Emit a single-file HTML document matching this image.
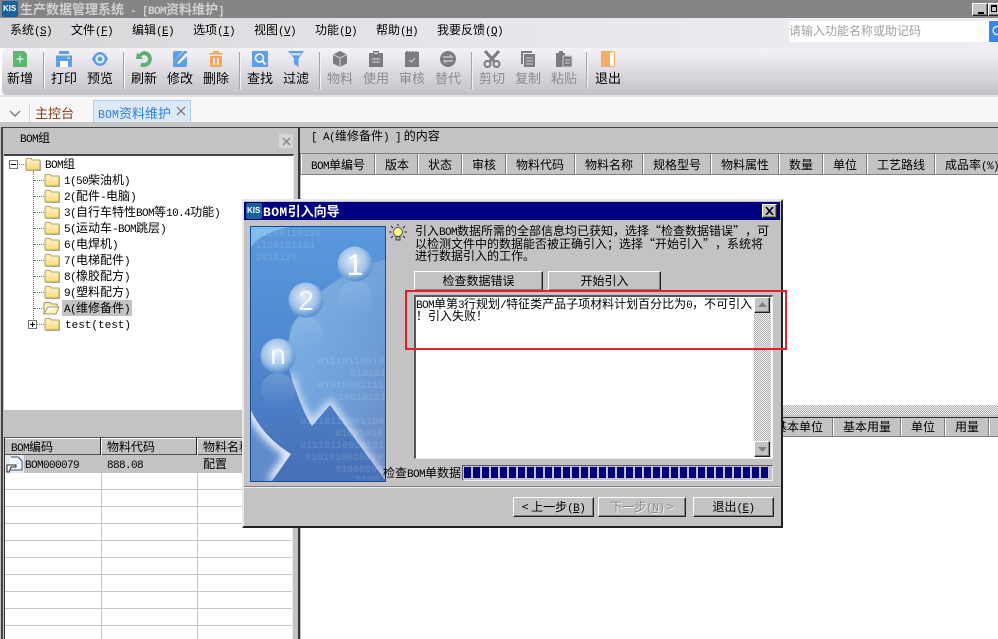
<!DOCTYPE html>
<html lang="zh"><head><meta charset="utf-8"><title>BOM资料维护</title>
<style>
html,body{margin:0;padding:0;width:998px;height:639px;overflow:hidden;background:#fff}
body{position:relative;font:12px/14px "WenQuanYi Zen Hei","Noto Sans CJK SC",sans-serif;color:#000}
div,svg,span.t{position:absolute}
.t{position:absolute;white-space:nowrap;line-height:14px}
i{font:normal 11px/14px "Liberation Mono",monospace;letter-spacing:-.6px}
.g{color:#8c8a8d}
.tb{font-size:13px;top:71px;width:36px;text-align:center}
.sep{top:52px;width:1px;height:37px;background:#a8a6aa;border-right:1px solid #f4f2f5}
.ic{top:50px;width:20px;height:18px}
.hs{width:1px;background:#808080;border-right:1px solid #fff}
.hl{height:1px;left:5px;width:287px;background:#c8c6c9}
.vl{width:1px;top:473px;height:166px;background:#c8c6c9}
.btn{background:#c4c2c5;border:1px solid;border-color:#fff #222 #222 #fff;box-shadow:inset -1px -1px 0 #808080;box-sizing:border-box;text-align:center}
.dither{background:repeating-conic-gradient(#b4b2b5 0 25%,#eee 0 50%) 0 0/2px 2px}
.q{display:inline-block;width:12px}
.dots{border-top:1px dotted #777;height:0;width:10px}
</style></head><body>
<svg width="0" height="0" style="position:absolute"><defs>
<linearGradient id="fg" x1="0" y1="0" x2="0" y2="1"><stop offset="0" stop-color="#fff8d0"/><stop offset="1" stop-color="#f7d670"/></linearGradient>
<symbol id="folder" viewBox="0 0 16 14"><path d="M1 3V2.500L2 1.500H6L7.500 3H15V13H1Z" fill="url(#fg)" stroke="#b5a05a"/><path d="M2 13.500H15.500V4" fill="none" stroke="#9a9a9a" stroke-width=".7"/></symbol>
</defs></svg>

<!-- title bar -->
<div style="left:0;top:0;width:998px;height:18px;background:#858386"></div>
<svg style="left:2px;top:1px" width="16" height="16"><rect width="16" height="16" rx="2" fill="#17619c"/></svg>
<span class="t" style="left:3px;top:2px;font:bold 8px/14px 'Liberation Sans',sans-serif;color:#fff">KIS</span>
<span class="t" style="left:20px;top:2px;font-size:13px;font-weight:bold;color:#d2d0d2">生产数据管理系统<i style="font-weight:bold"> - [BOM</i>资料维护<i style="font-weight:bold">]</i></span>
<div class="btn" style="left:972px;top:3px;width:16px;height:13px"><div style="left:5px;top:8px;width:6px;height:2px;background:#000"></div></div>
<div class="btn" style="left:988px;top:3px;width:12px;height:13px"><div style="left:2px;top:1px;width:6px;height:7px;border:1px solid #000;border-top-width:2px;box-sizing:border-box"></div></div>

<!-- menu -->
<div style="left:0;top:18px;width:998px;height:30px;background:linear-gradient(90deg,#d8d6d9,#e8e6ea 50%,#efedf1)"></div>
<span class="t" style="left:10px;top:23px">系统<i>(<u>S</u>)</i></span>
<span class="t" style="left:71px;top:23px">文件<i>(<u>F</u>)</i></span>
<span class="t" style="left:132px;top:23px">编辑<i>(<u>E</u>)</i></span>
<span class="t" style="left:193px;top:23px">选项<i>(<u>I</u>)</i></span>
<span class="t" style="left:254px;top:23px">视图<i>(<u>V</u>)</i></span>
<span class="t" style="left:315px;top:23px">功能<i>(<u>D</u>)</i></span>
<span class="t" style="left:376px;top:23px">帮助<i>(<u>H</u>)</i></span>
<span class="t" style="left:437px;top:23px">我要反馈<i>(<u>Q</u>)</i></span>
<div style="left:789px;top:21px;width:200px;height:21px;background:#fff"></div>
<span class="t" style="left:789px;top:24px;font-size:12px;color:#a0a0a0">请输入功能名称或助记码</span>
<div style="left:989px;top:21px;width:9px;height:21px;background:#3a86ee"></div>
<svg style="left:989px;top:21px" width="9" height="21"><circle cx="8" cy="9.500" r="4" fill="none" stroke="#d8e8ff" stroke-width="1.500"/></svg>

<!-- toolbar -->
<div style="left:2px;top:48px;width:996px;height:47px;border-radius:4px 0 0 4px;background:linear-gradient(180deg,#f4f2f6 0,#eceaee 20%,#c3c1c5 100%)"></div>
<div style="left:0;top:95px;width:998px;height:2px;background:#e2e0e3"></div>

<svg class="ic" style="left:10px"><path d="M3 1H14L17 4V17H3Z" fill="#5cb76f"/><path d="M10 5.500V12.500M6.500 9H13.500" stroke="#dff3e3" stroke-width="1.300"/></svg>
<svg class="ic" style="left:54px"><path d="M5 1H15V4H5Z" fill="#5f9ee8"/><path d="M2 5.500H18V17H2Z" fill="#5f9ee8"/><path d="M6 11H14V17H6Z" fill="#fff"/><path d="M13 8H16" stroke="#fff"/></svg>
<svg class="ic" style="left:90px"><path d="M2 9Q5 2 10 2Q15 2 18 9Q15 16 10 16Q5 16 2 9Z" fill="#5f9ee8"/><circle cx="10" cy="9" r="4.500" fill="#e6f0fb"/><circle cx="10" cy="9" r="2.500" fill="#5f9ee8"/></svg>
<svg class="ic" style="left:134px"><path d="M10 1A8 8 0 1 1 6 16L8 12.500A4 4 0 1 0 7 6.500L9 9H2L3 2.500L5 4.500A8 8 0 0 1 10 1Z" fill="#5cae72"/></svg>
<svg class="ic" style="left:170px"><path d="M3 3Q3 1 5 1H13L3 12Z" fill="#5f9ee8"/><path d="M3 17V12L14 1H17V15Q17 17 15 17Z" fill="#5f9ee8"/><path d="M8 12L16 3L18 5L10 13L7 14Z" fill="#fff"/></svg>
<svg class="ic" style="left:206px"><path d="M3 3H17V4.500H3ZM7 1H13V3H7Z" fill="#f0a860"/><path d="M4 6H16V17H4Z" fill="#f0a860"/><path d="M8 8V15M12 8V15" stroke="#fff" stroke-width="1.300"/></svg>
<svg class="ic" style="left:250px"><path d="M2 1H18V17H2Z" fill="#5f9ee8"/><circle cx="9.500" cy="8" r="4" fill="none" stroke="#fff" stroke-width="1.500"/><path d="M12.500 11L15.500 14.500" stroke="#fff" stroke-width="1.800"/></svg>
<svg class="ic" style="left:286px"><path d="M2 1H18L12.500 8.500V17L8 14V8.500Z" fill="#5f9ee8"/><path d="M4 3H16L14 5.500H6Z" fill="#c7ddf6"/></svg>
<svg class="ic" style="left:330px"><path d="M10 1L17 4.500V13.500L10 17L3 13.500V4.500Z" fill="#7d7b7f"/><path d="M3 4.500L10 8V17M10 8L17 4.500" fill="none" stroke="#d2d0d4"/></svg>
<svg class="ic" style="left:366px"><path d="M3 3H7V1H13V3H17V17H3Z" fill="#7d7b7f"/><path d="M8 2.500H12V4H8Z" fill="#d2d0d4"/><path d="M6 9H14M6 12H14" stroke="#d2d0d4"/></svg>
<svg class="ic" style="left:402px"><path d="M3 2H17V17H3Z" fill="#7d7b7f"/><path d="M5 1V3M8 1V3M11 1V3M14 1V3" stroke="#7d7b7f" stroke-width="1.500"/><path d="M7 10L9.500 12L13 8" fill="none" stroke="#d2d0d4"/></svg>
<svg class="ic" style="left:438px"><circle cx="10" cy="9" r="8" fill="#7d7b7f"/><path d="M5 7H14L12 5M15 11H6L8 13" fill="none" stroke="#d2d0d4" stroke-width="1.200"/></svg>
<svg class="ic" style="left:482px"><path d="M3 1L12 11M17 1L8 11" stroke="#7d7b7f" stroke-width="3"/><circle cx="5.500" cy="14" r="3" fill="none" stroke="#7d7b7f" stroke-width="2"/><circle cx="14.500" cy="14" r="3" fill="none" stroke="#7d7b7f" stroke-width="2"/></svg>
<svg class="ic" style="left:518px"><path d="M3 1H14V3H5V14H3Z" fill="#7d7b7f"/><path d="M6 4H17V17H6Z" fill="#7d7b7f"/><path d="M8 8H15M8 11H15M8 14H15" stroke="#d2d0d4"/></svg>
<svg class="ic" style="left:554px"><path d="M2 3H5V1H9V3H11V17H2Z" fill="#7d7b7f"/><path d="M9 6H18V17H9Z" fill="#7d7b7f" stroke="#d2d0d4"/><path d="M11 10H16M11 13H16" stroke="#d2d0d4"/></svg>
<svg class="ic" style="left:598px"><path d="M3 1H17V17H3Z" fill="#f2ae62"/><path d="M12 3L16 1.500V16H12Z" fill="#fff"/></svg>

<div class="sep" style="left:43px"></div><div class="sep" style="left:123px"></div><div class="sep" style="left:239px"></div><div class="sep" style="left:319px"></div><div class="sep" style="left:471px"></div><div class="sep" style="left:586px"></div>
<span class="t tb" style="left:2px">新增</span><span class="t tb" style="left:46px">打印</span><span class="t tb" style="left:82px">预览</span><span class="t tb" style="left:126px">刷新</span><span class="t tb" style="left:162px">修改</span><span class="t tb" style="left:198px">删除</span><span class="t tb" style="left:242px">查找</span><span class="t tb" style="left:278px">过滤</span>
<span class="t tb g" style="left:322px">物料</span><span class="t tb g" style="left:358px">使用</span><span class="t tb g" style="left:394px">审核</span><span class="t tb g" style="left:430px">替代</span><span class="t tb g" style="left:474px">剪切</span><span class="t tb g" style="left:510px">复制</span><span class="t tb g" style="left:546px">粘贴</span><span class="t tb" style="left:590px">退出</span>

<!-- tab strip -->
<div style="left:0;top:97px;width:998px;height:25px;background:#f7f7f7"></div>
<div style="left:0;top:122px;width:998px;height:4px;background:#c8c5c9"></div>
<svg style="left:9px;top:109px" width="12" height="9"><path d="M1 2L6 7L11 2" fill="none" stroke="#666" stroke-width="1.200"/></svg>
<div style="left:29px;top:104px;width:1px;height:18px;background:#d8d6d8"></div>
<span class="t" style="left:35px;top:106px;font-size:13px;color:#8a3a1c">主控台</span>
<div style="left:93px;top:100px;width:96px;background:#dde9f6;border:1px solid #aed2f2;border-bottom:0;height:21px"></div>
<span class="t" style="left:98px;top:106px;font-size:13px;color:#2a7fe0"><i style="font-size:11.500px;letter-spacing:.1px">BOM</i>资料维护</span>
<svg style="left:176px;top:106px" width="10" height="10"><path d="M1 1L9 9M9 1L1 9" stroke="#666" stroke-width="1"/></svg>

<!-- main background -->
<div style="left:0;top:126px;width:301px;height:513px;background:#c4c2c5"></div>
<div style="left:1px;top:127px;width:297px;height:512px;border:solid #444;border-width:1px 0 0 2px;box-sizing:border-box"></div>
<div style="left:298px;top:127px;width:2px;height:512px;background:#333"></div>
<div style="left:300px;top:126px;width:698px;height:28px;background:#c4c2c5"></div>
<div style="left:300px;top:127px;width:698px;height:1px;background:#444"></div>
<span class="t" style="left:20px;top:131px"><i>BOM</i>组</span>
<div style="left:279px;top:134px;width:14px;height:14px;background:#d6d4d6"></div>
<svg style="left:282px;top:137px" width="9" height="9"><path d="M1 1L8 8M8 1L1 8" stroke="#888" stroke-width="1.500"/></svg>
<span class="t" style="left:311px;top:129px"><i>[ A(</i>维修备件<i>) ]</i> 的内容</span>

<!-- tree -->
<div style="left:4px;top:154px;width:290px;height:256px;background:#fff;border-top:2px solid #444;border-right:1px solid #eee;box-sizing:border-box"></div>
<div style="left:33px;top:171px;width:0;height:154px;border-left:1px dotted #777"></div>
<div style="left:17px;top:164px;width:9px;border-top:1px dotted #777"></div>
<div style="left:9px;top:160px;width:9px;height:9px;border:1px solid #777;background:#fff;box-sizing:border-box"><div style="left:1px;top:3px;width:5px;height:1px;background:#000"></div></div>
<svg style="left:25px;top:157px" width="16" height="14"><use href="#folder"/></svg>
<span class="t" style="left:45px;top:157px"><i>BOM</i>组</span>

<div class="dots" style="left:34px;top:180px"></div><svg style="left:44px;top:173px" width="16" height="14"><use href="#folder"/></svg><span class="t" style="left:64px;top:173px"><i>1(50</i>柴油机<i>)</i></span>
<div class="dots" style="left:34px;top:196px"></div><svg style="left:44px;top:189px" width="16" height="14"><use href="#folder"/></svg><span class="t" style="left:64px;top:189px"><i>2(</i>配件<i>-</i>电脑<i>)</i></span>
<div class="dots" style="left:34px;top:212px"></div><svg style="left:44px;top:205px" width="16" height="14"><use href="#folder"/></svg><span class="t" style="left:64px;top:205px"><i>3(</i>自行车特性<i>BOM</i>等<i>10.4</i>功能<i>)</i></span>
<div class="dots" style="left:34px;top:228px"></div><svg style="left:44px;top:221px" width="16" height="14"><use href="#folder"/></svg><span class="t" style="left:64px;top:221px"><i>5(</i>运动车<i>-BOM</i>跳层<i>)</i></span>
<div class="dots" style="left:34px;top:244px"></div><svg style="left:44px;top:237px" width="16" height="14"><use href="#folder"/></svg><span class="t" style="left:64px;top:237px"><i>6(</i>电焊机<i>)</i></span>
<div class="dots" style="left:34px;top:260px"></div><svg style="left:44px;top:253px" width="16" height="14"><use href="#folder"/></svg><span class="t" style="left:64px;top:253px"><i>7(</i>电梯配件<i>)</i></span>
<div class="dots" style="left:34px;top:276px"></div><svg style="left:44px;top:269px" width="16" height="14"><use href="#folder"/></svg><span class="t" style="left:64px;top:269px"><i>8(</i>橡胶配方<i>)</i></span>
<div class="dots" style="left:34px;top:292px"></div><svg style="left:44px;top:285px" width="16" height="14"><use href="#folder"/></svg><span class="t" style="left:64px;top:285px"><i>9(</i>塑料配方<i>)</i></span>
<div class="dots" style="left:34px;top:308px"></div><svg style="left:43px;top:301px" width="17" height="14"><path d="M1 13V2.500L2 1.500H7L8.500 3H14V6H5L1 13H13L16 6H14" fill="#fdf0b8" stroke="#a89a60"/></svg>
<div style="left:62px;top:300px;width:70px;height:16px;background:#c4c2c5"></div><span class="t" style="left:64px;top:301px"><i>A(</i>维修备件<i>)</i></span>
<div class="dots" style="left:36px;top:324px;width:8px"></div><svg style="left:44px;top:317px" width="16" height="14"><use href="#folder"/></svg><span class="t" style="left:65px;top:317px"><i style="letter-spacing:0">test(test)</i></span>
<div style="left:28px;top:320px;width:9px;height:9px;border:1px solid #777;background:#fff;box-sizing:border-box"><div style="left:1px;top:3px;width:5px;height:1px;background:#000"></div><div style="left:3px;top:1px;width:1px;height:5px;background:#000"></div></div>

<!-- left table -->
<div style="left:4px;top:437px;width:289px;height:202px;background:#fff;border-top:1px solid #555;border-left:1px solid #333;border-right:1px solid #eee;box-sizing:border-box"></div>
<div style="left:5px;top:438px;width:287px;height:17px;background:#c4c2c5;border-top:1px solid #fff;border-bottom:1px solid #555;box-sizing:border-box"></div>
<div style="left:100px;top:438px;width:1px;height:17px;background:#222;border-right:1px solid #fff"></div><div style="left:196px;top:438px;width:1px;height:17px;background:#222;border-right:1px solid #fff"></div>
<span class="t" style="left:11px;top:440px"><i>BOM</i>编码</span><span class="t" style="left:107px;top:440px">物料代码</span><span class="t" style="left:203px;top:440px">物料名称</span>
<div style="left:5px;top:455px;width:287px;height:18px;background:#c4c2c5"></div>
<div style="left:5px;top:455px;width:19px;height:18px;background:#e8e8ea"></div>
<svg style="left:6px;top:456px" width="18" height="17"><path d="M5 1H12L16 5V14H2" fill="#f4f8ff" stroke="#33508a"/><path d="M1 9H10V11H5L3 16H1Z" fill="#fff" stroke="#222"/></svg>
<span class="t" style="left:25px;top:457px"><i>BOM000079</i></span><span class="t" style="left:107px;top:457px"><i>888.08</i></span><span class="t" style="left:203px;top:457px">配置</span>
<div class="hl" style="top:489px"></div><div class="hl" style="top:506px"></div><div class="hl" style="top:523px"></div><div class="hl" style="top:540px"></div><div class="hl" style="top:557px"></div><div class="hl" style="top:574px"></div><div class="hl" style="top:591px"></div><div class="hl" style="top:608px"></div><div class="hl" style="top:625px"></div>
<div class="vl" style="left:101px"></div><div class="vl" style="left:197px"></div>

<!-- right top header -->
<div style="left:300px;top:153px;width:698px;height:22px;background:#c4c2c5;border-top:1px solid #808080;border-bottom:1px solid #808080;box-sizing:border-box"></div>
<div class="hs" style="left:300px;top:154px;height:20px"></div>
<div class="hs" style="left:374px;top:154px;height:20px"></div><div class="hs" style="left:417px;top:154px;height:20px"></div><div class="hs" style="left:461px;top:154px;height:20px"></div><div class="hs" style="left:505px;top:154px;height:20px"></div><div class="hs" style="left:574px;top:154px;height:20px"></div><div class="hs" style="left:642px;top:154px;height:20px"></div><div class="hs" style="left:710px;top:154px;height:20px"></div><div class="hs" style="left:778px;top:154px;height:20px"></div><div class="hs" style="left:822px;top:154px;height:20px"></div><div class="hs" style="left:866px;top:154px;height:20px"></div><div class="hs" style="left:934px;top:154px;height:20px"></div>
<span class="t" style="left:311px;top:158px"><i>BOM</i>单编号</span><span class="t" style="left:385px;top:158px">版本</span><span class="t" style="left:428px;top:158px">状态</span><span class="t" style="left:472px;top:158px">审核</span><span class="t" style="left:516px;top:158px">物料代码</span><span class="t" style="left:585px;top:158px">物料名称</span><span class="t" style="left:653px;top:158px">规格型号</span><span class="t" style="left:721px;top:158px">物料属性</span><span class="t" style="left:789px;top:158px">数量</span><span class="t" style="left:833px;top:158px">单位</span><span class="t" style="left:877px;top:158px">工艺路线</span><span class="t" style="left:945px;top:158px">成品率<i>(%)</i></span>

<!-- right lower header -->
<div class="dither" style="left:301px;top:405px;width:697px;height:10px"></div>
<div style="left:301px;top:415px;width:697px;height:2px;background:#c4c2c5"></div>
<div style="left:301px;top:417px;width:697px;height:20px;background:#c4c2c5;border-top:1px solid #333;border-bottom:1px solid #808080;box-sizing:border-box"></div>
<div class="hs" style="left:832px;top:418px;height:18px"></div><div class="hs" style="left:900px;top:418px;height:18px"></div><div class="hs" style="left:944px;top:418px;height:18px"></div><div class="hs" style="left:988px;top:418px;height:18px"></div>
<span class="t" style="left:775px;top:420px">基本单位</span><span class="t" style="left:843px;top:420px">基本用量</span><span class="t" style="left:911px;top:420px">单位</span><span class="t" style="left:955px;top:420px">用量</span>

<!-- dialog -->
<div style="left:242px;top:199px;width:541px;height:329px;background:#c4c2c5;border:solid 2px;border-color:#e8e8e8 #222 #222 #e8e8e8;box-sizing:border-box"></div>
<div style="left:244px;top:202px;width:536px;height:18px;background:#000080"></div>
<svg style="left:246px;top:203px" width="16" height="16"><rect width="16" height="16" rx="2" fill="#17619c"/></svg>
<span class="t" style="left:247px;top:204px;font:bold 8px/14px 'Liberation Sans',sans-serif;color:#fff">KIS</span>
<span class="t" style="left:263px;top:204px;font-size:13px;font-weight:bold;color:#fff"><i style="font-size:13px;font-weight:bold;letter-spacing:.4px">BOM</i>引入向导</span>
<div class="btn" style="left:762px;top:204px;width:15px;height:14px"></div>
<svg style="left:765px;top:207px" width="9" height="8"><path d="M1 0L8 8M8 0L1 8" stroke="#000" stroke-width="1.600"/></svg>

<!-- wizard picture -->
<svg style="left:250px;top:226px" width="136" height="256" viewBox="0 0 136 256">
<defs>
<linearGradient id="bg" x1="0" y1="0" x2="0" y2="1"><stop offset="0" stop-color="#5a98dc"/><stop offset=".5" stop-color="#4f88cf"/><stop offset="1" stop-color="#466fb6"/></linearGradient>
<linearGradient id="lt" x1="0" y1="0" x2="1" y2="1"><stop offset="0" stop-color="#80b4e6"/><stop offset=".6" stop-color="#6f9fd8"/><stop offset="1" stop-color="#6a88c2"/></linearGradient>
<radialGradient id="sp" cx=".45" cy=".4" r=".62"><stop offset="0" stop-color="#e4eefa"/><stop offset=".6" stop-color="#a2c4e8"/><stop offset="1" stop-color="#5288cc"/></radialGradient>
<linearGradient id="rf" x1="0" y1="0" x2="0" y2="1"><stop offset="0" stop-color="#a8c8ea" stop-opacity=".3"/><stop offset="1" stop-color="#a8c8ea" stop-opacity="0"/></linearGradient>
<filter id="bl" x="-30%" y="-30%" width="160%" height="160%"><feGaussianBlur stdDeviation="4"/></filter>
<clipPath id="lc"><path d="M136 33Q75 50 45 95Q30 125 46 165Q54 188 62 200L80 179L136 255Z"/></clipPath>
<clipPath id="lc2"><path d="M0 182Q12 210 41 228L22 255H0Z"/></clipPath>
</defs>
<rect width="136" height="256" fill="url(#bg)"/>
<path d="M0 0H45Q12 5 0 22Z" fill="#80baee"/>
<path d="M136 33Q75 50 45 95Q30 125 46 165Q54 188 62 200L80 179L136 255Z" fill="url(#lt)"/>
<g clip-path="url(#lc)"><path d="M40 150Q46 178 62 200L80 179L134 256" fill="none" stroke="#e8f1fa" stroke-width="9" filter="url(#bl)" opacity=".8"/></g>
<path d="M0 182Q12 210 41 228L22 255H0Z" fill="#5f8ccc"/>
<g clip-path="url(#lc2)"><path d="M0 182Q12 210 41 228L22 255" fill="none" stroke="#eef4fb" stroke-width="10" filter="url(#bl)"/></g>
<g font-family="Liberation Mono,monospace" font-size="10" fill="#fff" opacity=".16"><text x="68" y="138">01110110010110</text><text x="100" y="150">0101011</text><text x="68" y="162">010100011111</text><text x="88" y="174">100101011</text><text x="50" y="198">0111011100110001</text><text x="85" y="210">01001010</text><text x="50" y="222">01110110010101</text><text x="55" y="234">01010100100100</text><text x="85" y="246">010000001</text><text x="105" y="256">1100</text><text x="5" y="10">01100110110</text><text x="5" y="22">1100101101</text><text x="5" y="34">1011110</text></g>
<circle cx="105" cy="72" r="17" fill="url(#rf)"/><circle cx="56" cy="108" r="17" fill="url(#rf)"/><circle cx="28" cy="164" r="17" fill="url(#rf)"/>
<circle cx="105" cy="38" r="17.500" fill="url(#sp)"/>
<circle cx="56" cy="74" r="17.500" fill="url(#sp)"/>
<circle cx="28" cy="130" r="17.500" fill="url(#sp)"/>
<text x="105" y="49" text-anchor="middle" font-family="Liberation Sans,sans-serif" font-size="30" fill="#fff">1</text>
<text x="56" y="84" text-anchor="middle" font-family="Liberation Sans,sans-serif" font-size="28" fill="#f4f8fd">2</text>
<text x="28" y="138" text-anchor="middle" font-family="Liberation Sans,sans-serif" font-size="28" fill="#f4f8fd">n</text>
<rect x=".5" y=".5" width="135" height="255" fill="none" stroke="#0c4f96"/>
</svg>

<!-- bulb -->
<svg style="left:389px;top:224px" width="18" height="18"><circle cx="9" cy="8" r="4.500" fill="#fffb80" stroke="#555"/><path d="M7 12.500H11V16H7Z" fill="#aaa" stroke="#444"/><path d="M9 0V2M2 2L4 4M16 2L14 4M0 8H2.500M18 8H15.500M2 14L4 12M16 14L14 12" stroke="#222"/></svg>

<span class="t" style="left:415px;top:224px">引入<i>BOM</i>数据所需的全部信息均已获知，选择<span class="q" style="text-align:right">“</span>检查数据错误<span class="q">”</span>，可</span>
<span class="t" style="left:415px;top:237px">以检测文件中的数据能否被正确引入；选择<span class="q" style="text-align:right">“</span>开始引入<span class="q">”</span>，系统将</span>
<span class="t" style="left:415px;top:249px">进行数据引入的工作。</span>

<div class="btn" style="left:414px;top:271px;width:129px;height:20px;line-height:17px">检查数据错误</div>
<div class="btn" style="left:548px;top:271px;width:113px;height:20px;line-height:17px">开始引入</div>

<!-- text box -->
<div style="left:414px;top:295px;width:359px;height:164px;background:#fff;border:solid;border-width:2px 1px 1px 2px;border-color:#555 #eee #eee #555;box-sizing:border-box"></div>
<span class="t" style="left:416px;top:297px"><i>BOM</i>单第<i>3</i>行规划<i>/</i>特征类产品子项材料计划百分比为<i>0</i>，不可引入</span>
<span class="t" style="left:416px;top:309px">！引入失败！</span>
<div class="dither" style="left:754px;top:297px;width:17px;height:160px"></div>
<div class="btn" style="left:754px;top:297px;width:16px;height:16px"></div>
<svg style="left:758px;top:302px" width="9" height="5"><path d="M4.500 0L9 5H0Z" fill="#808080"/></svg>
<div class="btn" style="left:754px;top:441px;width:16px;height:16px"></div>
<svg style="left:758px;top:447px" width="9" height="5"><path d="M0 0H9L4.500 5Z" fill="#808080"/></svg>

<!-- progress -->
<span class="t" style="left:383px;top:466px">检查<i>BOM</i>单数据</span>
<div style="left:462px;top:465px;width:311px;height:16px;background:#c4c2c5;border:1px solid;border-color:#555 #eee #eee #555;box-sizing:border-box"></div>
<div style="left:464px;top:467px;width:305px;height:11px;background:repeating-linear-gradient(90deg,#000080 0 7px,#c4c2c5 7px 9px)"></div>

<!-- footer -->
<div style="left:244px;top:486px;width:536px;height:1px;background:#808080"></div>
<div style="left:244px;top:487px;width:536px;height:1px;background:#f0f0f0"></div>
<div class="btn" style="left:513px;top:497px;width:81px;height:20px;line-height:17px">&lt; 上一步<i>(<u>B</u>)</i></div>
<div class="btn" style="left:598px;top:497px;width:88px;height:20px;line-height:17px;color:#8a888b;text-shadow:1px 1px 0 #f2f2f2">下一步<i>(<u>N</u>)</i> &gt;</div>
<div class="btn" style="left:693px;top:497px;width:81px;height:20px;line-height:17px">退出<i>(<u>E</u>)</i></div>

<!-- red highlight -->
<div style="left:405px;top:290px;width:382px;height:60px;border:2px solid #ee1c25;box-sizing:border-box"></div>
</body></html>
